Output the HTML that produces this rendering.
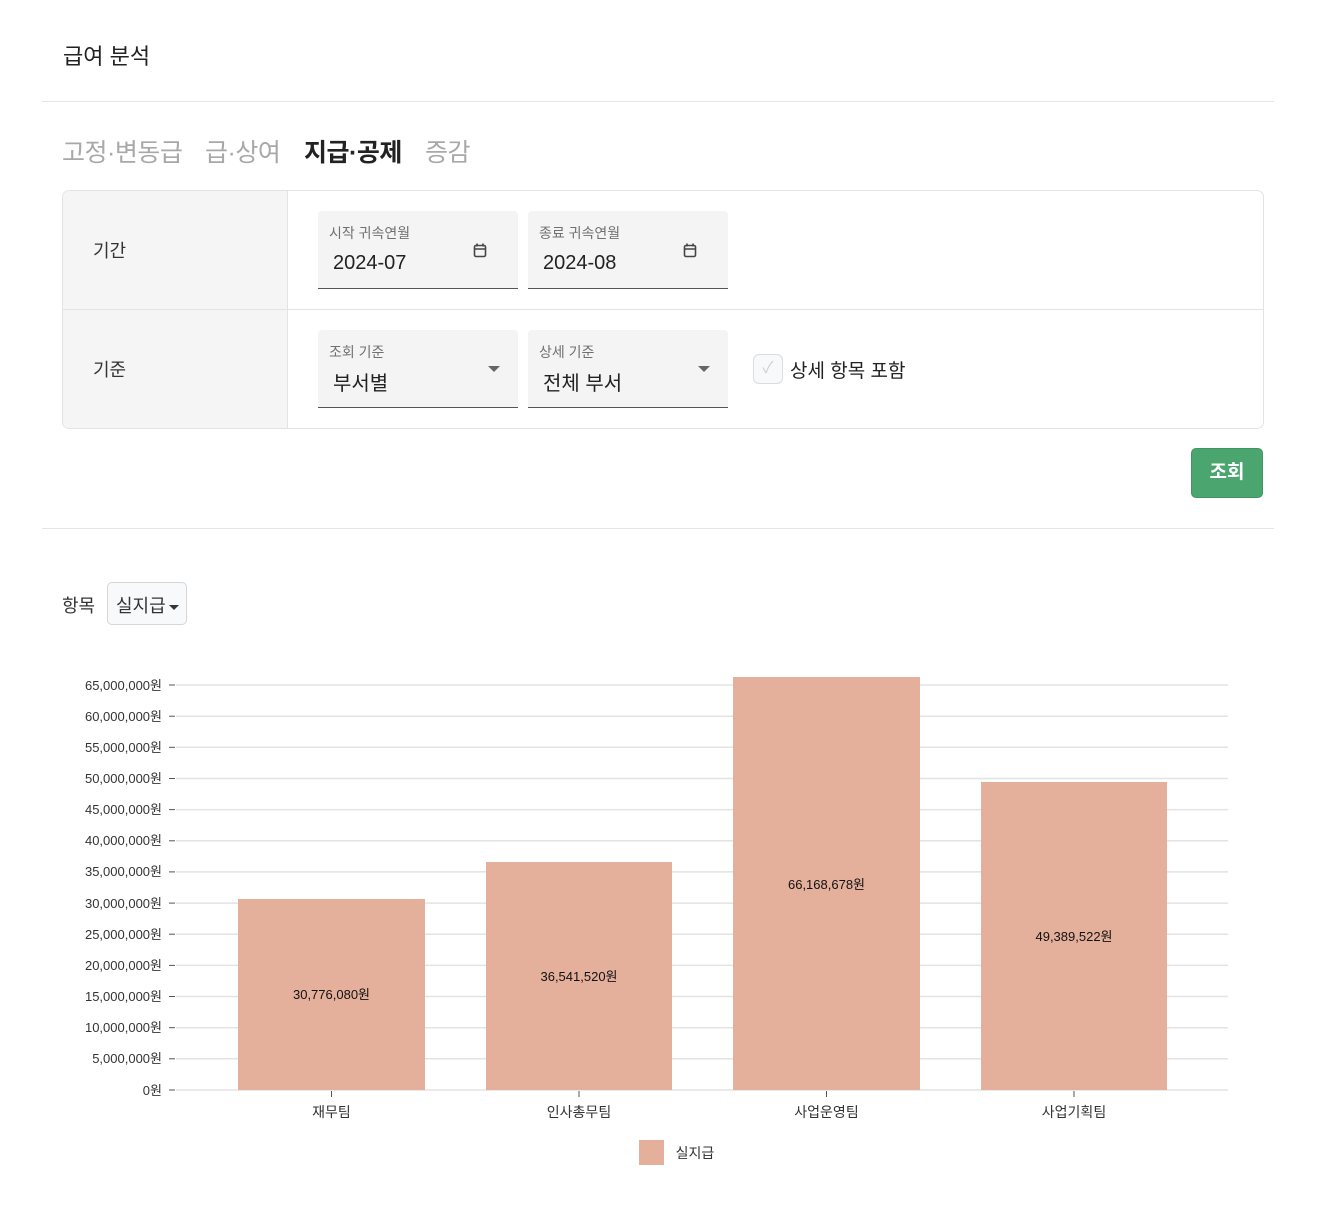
<!DOCTYPE html>
<html><head><meta charset="utf-8"><style>
*{box-sizing:border-box;margin:0;padding:0}
body{width:1317px;height:1221px;background:#fff;position:relative;font-family:"Liberation Sans","Noto Sans CJK KR",sans-serif;color:#212529;overflow:hidden}
.a{position:absolute;white-space:nowrap}
.hr{position:absolute;left:42px;width:1232px;height:1px;background:#e5e5e5}
.tab{font-size:25px;top:133px;color:#a8a8a8;letter-spacing:-0.5px}
.card{position:absolute;left:62px;top:190px;width:1202px;height:239px;border:1px solid #e3e3e3;border-radius:7px;overflow:hidden}
.lab{position:absolute;left:0;width:225px;background:#f5f5f5;border-right:1px solid #e3e3e3}
.fld{position:absolute;width:200px;height:78px;background:#f4f4f4;border-bottom:1px solid #555;border-radius:4px 4px 0 0}
.fld .l{position:absolute;left:11px;top:12px;font-size:14px;color:#707070}
.fld .v{position:absolute;left:15px;top:41px;font-size:20px;color:#222}
.caret{position:absolute;right:18px;top:36px;width:0;height:0;border-left:6px solid transparent;border-right:6px solid transparent;border-top:6px solid #666}
</style></head><body>
<div class="a" style="left:63px;top:39px;font-size:22px;color:#222">급여 분석</div>
<div class="hr" style="top:101px"></div>
<div class="a tab" style="left:62px">고정·변동급</div>
<div class="a tab" style="left:205px">급·상여</div>
<div class="a tab" style="left:304px;color:#222;font-weight:600">지급·공제</div>
<div class="a tab" style="left:425px">증감</div>

<div class="card">
 <div class="lab" style="top:0;height:119px"></div>
 <div class="lab" style="top:119px;height:120px"></div>
 <div style="position:absolute;left:0;right:0;top:118px;height:1px;background:#e3e3e3"></div>
 <div class="a" style="left:30px;top:46px;font-size:18px;color:#333">기간</div>
 <div class="a" style="left:30px;top:165px;font-size:18px;color:#333">기준</div>
 <div class="fld" style="left:255px;top:20px"><div class="l">시작 귀속연월</div><div class="v">2024-07</div>
  <svg style="position:absolute;left:155px;top:31px" width="14" height="16" viewBox="0 0 14 16"><rect x="1.5" y="3.5" width="11" height="11" rx="1.5" fill="none" stroke="#444" stroke-width="1.6"/><path d="M1.5 7h11M4 1.5v3M10 1.5v3" stroke="#444" stroke-width="1.6"/></svg></div>
 <div class="fld" style="left:465px;top:20px"><div class="l">종료 귀속연월</div><div class="v">2024-08</div>
  <svg style="position:absolute;left:155px;top:31px" width="14" height="16" viewBox="0 0 14 16"><rect x="1.5" y="3.5" width="11" height="11" rx="1.5" fill="none" stroke="#444" stroke-width="1.6"/><path d="M1.5 7h11M4 1.5v3M10 1.5v3" stroke="#444" stroke-width="1.6"/></svg></div>
 <div class="fld" style="left:255px;top:139px"><div class="l">조회 기준</div><div class="v" style="top:37px">부서별</div><div class="caret"></div></div>
 <div class="fld" style="left:465px;top:139px"><div class="l">상세 기준</div><div class="v" style="top:37px">전체 부서</div><div class="caret"></div></div>
 <div style="position:absolute;left:690px;top:163px;width:30px;height:30px;border:1px solid #dcdcdc;border-radius:6px;background:#f8f9fa;color:#d0d0d0;font-size:16px;text-align:center;line-height:28px">✓</div>
 <div class="a" style="left:727px;top:165px;font-size:19px;color:#222">상세 항목 포함</div>
</div>

<div class="a" style="left:1191px;top:448px;width:72px;height:50px;background:#4aa56f;border:1px solid #3f9462;border-radius:5px;color:#fff;font-size:19px;font-weight:bold;text-align:center;line-height:48px">조회</div>
<div class="hr" style="top:528px"></div>

<div class="a" style="left:62px;top:592px;font-size:18px;color:#333">항목</div>
<div class="a" style="left:107px;top:582px;width:80px;height:43px;border:1px solid #d6d6d6;border-radius:5px;background:#f8f9fa;font-size:18px;color:#333;padding:9px 0 0 8px">실지급<span style="display:inline-block;margin-left:3px;vertical-align:middle;border-left:5px solid transparent;border-right:5px solid transparent;border-top:5px solid #333"></span></div>

<svg class="a" style="left:0;top:0" width="1317" height="1221" font-family="Liberation Sans, Noto Sans CJK KR, sans-serif">
<g stroke="#e3e3e3" stroke-width="1.5">
<line x1="176" x2="1228" y1="685" y2="685"/><line x1="176" x2="1228" y1="716.2" y2="716.2"/><line x1="176" x2="1228" y1="747.3" y2="747.3"/><line x1="176" x2="1228" y1="778.5" y2="778.5"/><line x1="176" x2="1228" y1="809.6" y2="809.6"/><line x1="176" x2="1228" y1="840.8" y2="840.8"/><line x1="176" x2="1228" y1="871.9" y2="871.9"/><line x1="176" x2="1228" y1="903.1" y2="903.1"/><line x1="176" x2="1228" y1="934.2" y2="934.2"/><line x1="176" x2="1228" y1="965.4" y2="965.4"/><line x1="176" x2="1228" y1="996.5" y2="996.5"/><line x1="176" x2="1228" y1="1027.7" y2="1027.7"/><line x1="176" x2="1228" y1="1058.8" y2="1058.8"/><line x1="176" x2="1228" y1="1090" y2="1090"/>
</g>
<g stroke="#555" stroke-width="1">
<line x1="169" x2="175" y1="685" y2="685"/><line x1="169" x2="175" y1="716.2" y2="716.2"/><line x1="169" x2="175" y1="747.3" y2="747.3"/><line x1="169" x2="175" y1="778.5" y2="778.5"/><line x1="169" x2="175" y1="809.6" y2="809.6"/><line x1="169" x2="175" y1="840.8" y2="840.8"/><line x1="169" x2="175" y1="871.9" y2="871.9"/><line x1="169" x2="175" y1="903.1" y2="903.1"/><line x1="169" x2="175" y1="934.2" y2="934.2"/><line x1="169" x2="175" y1="965.4" y2="965.4"/><line x1="169" x2="175" y1="996.5" y2="996.5"/><line x1="169" x2="175" y1="1027.7" y2="1027.7"/><line x1="169" x2="175" y1="1058.8" y2="1058.8"/><line x1="169" x2="175" y1="1090" y2="1090"/>
<line x1="331.5" x2="331.5" y1="1091" y2="1097"/><line x1="579" x2="579" y1="1091" y2="1097"/><line x1="826.5" x2="826.5" y1="1091" y2="1097"/><line x1="1074" x2="1074" y1="1091" y2="1097"/>
</g>
<g font-size="13" fill="#333" text-anchor="end">
<text x="162" y="690">65,000,000원</text><text x="162" y="721">60,000,000원</text><text x="162" y="752">55,000,000원</text><text x="162" y="783">50,000,000원</text><text x="162" y="814">45,000,000원</text><text x="162" y="845">40,000,000원</text><text x="162" y="876">35,000,000원</text><text x="162" y="908">30,000,000원</text><text x="162" y="939">25,000,000원</text><text x="162" y="970">20,000,000원</text><text x="162" y="1001">15,000,000원</text><text x="162" y="1032">10,000,000원</text><text x="162" y="1063">5,000,000원</text><text x="162" y="1095">0원</text>
</g>
<g fill="#e5b09b">
<rect x="238" y="899" width="187" height="191"/><rect x="486" y="862" width="186" height="228"/><rect x="733" y="677" width="187" height="413"/><rect x="981" y="782" width="186" height="308"/>
<rect x="639" y="1140" width="25" height="25"/>
</g>
<g font-size="13" fill="#111" text-anchor="middle">
<text x="331.5" y="999">30,776,080원</text><text x="579" y="981">36,541,520원</text><text x="826.5" y="889">66,168,678원</text><text x="1074" y="941">49,389,522원</text>
</g>
<g font-size="14" fill="#333" text-anchor="middle">
<text x="331.5" y="1117">재무팀</text><text x="579" y="1117">인사총무팀</text><text x="826.5" y="1117">사업운영팀</text><text x="1074" y="1117">사업기획팀</text>
<text x="695" y="1158">실지급</text>
</g>
</svg>
</body></html>
